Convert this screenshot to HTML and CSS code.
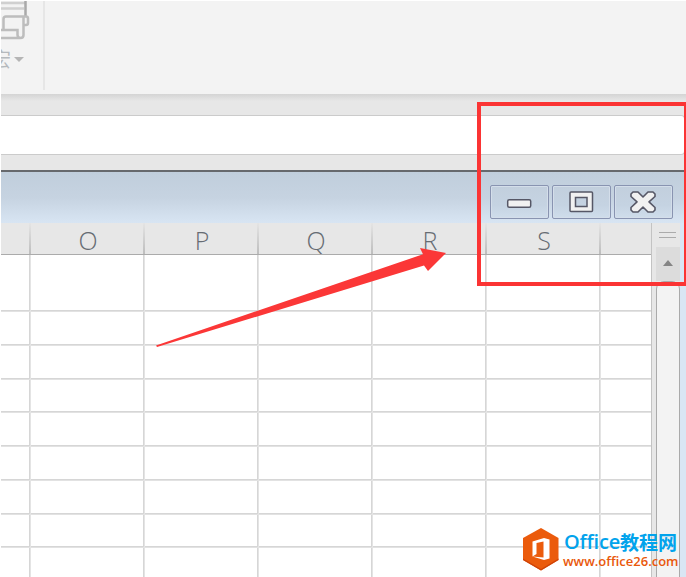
FILE: index.html
```html
<!DOCTYPE html>
<html lang="zh-CN">
<head>
<meta charset="utf-8">
<title>Workbook</title>
<link rel="stylesheet" href="styles.css">
</head>
<body>
<div class="app">
  <header class="ribbon">
    <div class="macro-group">
      <svg class="macro-icon" width="30" height="42" viewBox="0 0 30 42" fill="none" stroke="#bdbdbd" stroke-width="2.500">
        <path d="M0 2H25M0 7.500H23" stroke="#d0d0d0"/>
        <path d="M24.500 0V15" stroke="#a9a9a9"/>
        <path d="M2.500 28V18Q2.500 15.500 5 15.500H25Q27 15.500 27 17.500V22Q27 24 25 24H22.500V34Q22.500 37 19.500 37H0M0 29H16.500V34Q16.500 36.500 19.500 37M22.500 24V16"/>
      </svg>
      <div class="macro-label"><span class="macro-text">宏</span><i class="caret"></i></div>
    </div>
  </header>
  <div class="formula-area"><div class="formula-input"></div></div>
  <div class="titlebar">
    <div class="win-button"><svg width="30" height="26" viewBox="0 0 30 26"><rect x="2.700" y="10.700" width="23" height="7.500" rx="1.500" fill="#f1f1f1" stroke="#565766" stroke-width="1.500"/></svg></div>
    <div class="win-button"><svg width="30" height="26" viewBox="0 0 30 26"><path fill-rule="evenodd" d="M4 3H24.500Q25.500 3 25.500 4V21.500Q25.500 22.500 24.500 22.500H4Q3 22.500 3 21.500V4Q3 3 4 3ZM8.500 8.500V17.500H20V8.500Z" fill="#f1f1f1" stroke="#565766" stroke-width="1.500"/></svg></div>
    <div class="win-button"><svg width="30" height="26" viewBox="0 0 30 26"><path d="M4 3H9L14 8 19 3H24L26 5V7.500L20 12.800 26 18.500V21L24 23H19L14 18 9 23H4L2 21V18.500L8 12.800 2 7.500V5Z" fill="#f1f1f1" stroke="#565766" stroke-width="1.600" stroke-linejoin="round"/></svg></div>
  </div>
  <main class="workspace">
    <div class="sheet">
      <div class="heads"><div></div><div>O</div><div>P</div><div>Q</div><div>R</div><div>S</div><div></div></div>
      <div class="cells">
        <div></div><div></div><div></div><div></div><div></div><div></div><div></div>
        <div></div><div></div><div></div><div></div><div></div><div></div><div></div>
        <div></div><div></div><div></div><div></div><div></div><div></div><div></div>
        <div></div><div></div><div></div><div></div><div></div><div></div><div></div>
        <div></div><div></div><div></div><div></div><div></div><div></div><div></div>
        <div></div><div></div><div></div><div></div><div></div><div></div><div></div>
        <div></div><div></div><div></div><div></div><div></div><div></div><div></div>
        <div></div><div></div><div></div><div></div><div></div><div></div><div></div>
        <div></div><div></div><div></div><div></div><div></div><div></div><div></div>
      </div>
    </div>
    <aside class="scrollbar">
      <div class="split"></div>
      <div class="scroll-up"><i></i></div>
      <div class="thumb"></div>
    </aside>
  </main>
</div>
<svg class="arrow" width="300" height="110" viewBox="0 0 300 110"><path d="M6 105.500L273 14.300 270 8 296 13 278 31 274 25.500 7 107Z" fill="#fb3737"/></svg>
<div class="frame"></div>
<div class="watermark">
  <svg width="36" height="43" viewBox="0 0 36 43">
    <path d="M18 0L35.500 10V32L18 42.500 0 32V10Z" fill="#eb5b0c"/>
    <path d="M0 30.500V32L18 42.500 35.500 32V30.500L18 41Z" fill="#cf4307"/>
    <path fill-rule="evenodd" d="M9.500 13.500L21 10 26.500 11.500V30.500L21 32 9.500 28.500 20.500 29.500V13.500L13.500 15V26L9.500 28.500Z" fill="#fff"/>
  </svg>
  <div class="brand"><div class="brand-name">Office<b>教程网</b></div><div class="brand-url">www.office26.com</div></div>
</div>
</body>
</html>
```
FILE: styles.css
```css
* { box-sizing: border-box; }
body { margin: 0; width: 686px; height: 577px; overflow: hidden; position: relative; background: #fff; font-family: "Open Sans", "Noto Sans CJK SC", sans-serif; }
.app { height: 577px; margin-left: 1px; display: flex; flex-direction: column; }
.ribbon { height: 94px; padding-top: 1px; flex: none; background: #f3f3f3; border-top: 1px solid #fff; }
.macro-group { width: 44px; height: 89px; margin-top: -1px; border-right: 2px solid #e6e6e6; overflow: hidden; }
.macro-icon { display: block; }
.macro-label { display: flex; align-items: center; height: 32px; }
.macro-text { width: 20px; margin-left: -10px; font: 400 20px/30px "Noto Sans CJK SC", sans-serif; color: #b5b9bd; }
.caret { margin-left: 3px; border: 5px solid transparent; border-top: 5px solid #b5b5b5; border-bottom: 0; }
.formula-area { height: 76px; flex: none; padding: 21px 1px 15px 0; background: linear-gradient(#d4d4d4, #e7e7e7 7px); }
.formula-input { height: 40px; background: #fff; border: 1px solid #cbcbcb; border-left: 0; border-radius: 0 4px 4px 0; }
.titlebar { height: 53px; flex: none; display: flex; justify-content: flex-end; gap: 3px; padding: 13px 13px 0 0; border-top: 2px solid #66696d; background: linear-gradient(#c0cedc, #c6d3e1 50%, #d8e5f3); }
.win-button { width: 59px; height: 34px; display: flex; align-items: center; justify-content: center; background: linear-gradient(#c2cfdd, #c5d3e2 60%, #cfddeb); border: 1px solid #8994b1; border-radius: 2px; box-shadow: inset 0 0 0 1px #d4deea; }
.workspace { flex: 1; display: flex; min-height: 0; background: #d9e6f4; }
.sheet { width: 650px; overflow: hidden; background: #fff; }
.heads, .cells { display: grid; grid-template-columns: 30px repeat(5, 114px) 50px; }
.heads { height: 32px; background: #e7e7e7; border-bottom: 1px solid #ababab; }
.heads div { height: 31px; padding-left: 2px; text-align: center; font-size: 25px; line-height: 35px; font-weight: 300; color: #666c73; border-right: 2px solid; border-image: linear-gradient(#e6e6e6, #bcbcbc) 1; }
.cells { grid-template-rows: 57px repeat(8, 33.75px); }
.cells div { border-right: 1px solid #e4e4e4; border-bottom: 1px solid #e2e2e2; box-shadow: inset -1px -1px #d6d6d6; }
.heads div:last-child { border: 0; border-image: none; }
.cells div:nth-child(7n) { border-right: 0; box-shadow: inset 0 -1px #d6d6d6; }
.scrollbar { width: 29px; background: #e7e7e7; border-left: 1px solid #c3c3c3; padding-left: 4px; display: flex; flex-direction: column; }
.split { height: 6px; flex: none; margin: 9px 4px 9px 3px; border-top: 1px solid #ababab; border-bottom: 1px solid #ababab; }
.scroll-up { height: 34px; flex: none; background: #dcdcdc; display: flex; justify-content: center; padding-top: 13px; }
.scroll-up i { height: 6px; border: 5px solid transparent; border-top: 0; border-bottom: 6px solid #858585; }
.thumb { flex: 1; margin-bottom: -10px; background: #f3f3f3; border: 1px solid #aaa; border-radius: 8px; }
.arrow { position: absolute; left: 150px; top: 240px; }
.frame { position: absolute; left: 477px; top: 102px; width: 211px; height: 184px; border: 4px solid #fb3434; }
.watermark { position: absolute; left: 523px; top: 528px; display: flex; }
.brand { margin-left: 4px; padding-top: 1px; white-space: nowrap; }
.brand-name { display: flex; padding-left: 1px; font-size: 20px; line-height: 26px; font-weight: 600; color: #02a3ec; letter-spacing: -.2px; }
.brand-name b { font: 700 19px/26px "Noto Sans CJK SC", sans-serif; letter-spacing: 0; }
.brand-url { font-size: 13px; line-height: 13px; font-weight: 600; color: #e9580b; }
```
